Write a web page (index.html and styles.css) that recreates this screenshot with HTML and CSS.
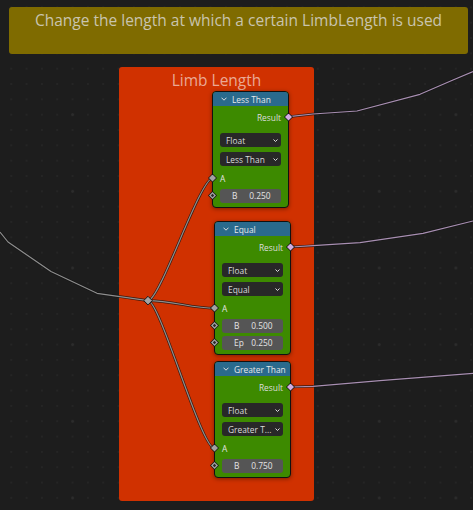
FILE: index.html
```html
<!DOCTYPE html>
<html>
<head>
<meta charset="utf-8">
<link rel="stylesheet" href="styles.css">
</head>
<body>
<div class="canvas">
  <div class="frame frame-note">Change the length at which a certain LimbLength is used</div>
  <div class="frame frame-limb"><span class="frame-label">Limb Length</span></div>

  <svg class="wires" width="473" height="510" viewBox="0 0 473 510">
    <g class="wire-grey">
      <polyline class="edge" points="0,232 8,242 51,271.5 97,293.3 148,300.6"/>
      <polyline class="core" points="0,232 8,242 51,271.5 97,293.3 148,300.6"/>
      <path class="edge" d="M148,300.6 C160,300.6 200,178 213,178"/>
      <path class="core" d="M148,300.6 C160,300.6 200,178 213,178"/>
      <path class="edge" d="M148,300.6 C172,300.6 192,308.3 215,308.3"/>
      <path class="core" d="M148,300.6 C172,300.6 192,308.3 215,308.3"/>
      <path class="edge" d="M148,300.6 C160,300.6 201,448.3 214.5,448.3"/>
      <path class="core" d="M148,300.6 C160,300.6 201,448.3 214.5,448.3"/>
    </g>
    <g class="wire-lilac">
      <polyline class="edge" points="289,116.7 313,114 357,111 420,94.3 453,80 473,71.5"/>
      <polyline class="core" points="289,116.7 313,114 357,111 420,94.3 453,80 473,71.5"/>
      <polyline class="edge" points="291,247 313,245.7 360,242.7 423,233.3 473,221"/>
      <polyline class="core" points="291,247 313,245.7 360,242.7 423,233.3 473,221"/>
      <polyline class="edge" points="290.5,387 313,386.3 380,380.7 473,373.3"/>
      <polyline class="core" points="290.5,387 313,386.3 380,380.7 473,373.3"/>
    </g>
    <polygon class="reroute" points="148,296.3 152.3,300.6 148,304.9 143.7,300.6"/>
  </svg>

  <div class="node node-less">
    <div class="node-header">
      <svg class="collapse" width="6" height="4" viewBox="0 0 6 4"><path d="M0.5 0.7 L3 3.2 L5.5 0.7"/></svg>
      <span>Less Than</span>
    </div>
    <div class="node-body">
      <div class="row out"><span>Result</span><i class="socket lilac"></i></div>
      <div class="select first"><span>Float</span><svg class="caret" width="5" height="3" viewBox="0 0 5 3"><path d="M0.5 0.5 L2.5 2.5 L4.5 0.5"/></svg></div>
      <div class="select"><span>Less Than</span><svg class="caret" width="5" height="3" viewBox="0 0 5 3"><path d="M0.5 0.5 L2.5 2.5 L4.5 0.5"/></svg></div>
      <div class="row in"><i class="socket grey"></i><span>A</span></div>
      <div class="field"><i class="socket hollow"></i><span>B</span><span>0.250</span></div>
    </div>
  </div>

  <div class="node node-equal">
    <div class="node-header">
      <svg class="collapse" width="6" height="4" viewBox="0 0 6 4"><path d="M0.5 0.7 L3 3.2 L5.5 0.7"/></svg>
      <span>Equal</span>
    </div>
    <div class="node-body">
      <div class="row out"><span>Result</span><i class="socket lilac"></i></div>
      <div class="select first"><span>Float</span><svg class="caret" width="5" height="3" viewBox="0 0 5 3"><path d="M0.5 0.5 L2.5 2.5 L4.5 0.5"/></svg></div>
      <div class="select"><span>Equal</span><svg class="caret" width="5" height="3" viewBox="0 0 5 3"><path d="M0.5 0.5 L2.5 2.5 L4.5 0.5"/></svg></div>
      <div class="row in"><i class="socket grey"></i><span>A</span></div>
      <div class="field"><i class="socket hollow"></i><span>B</span><span>0.500</span></div>
      <div class="field next"><i class="socket hollow"></i><span>Ep</span><span>0.250</span></div>
    </div>
  </div>

  <div class="node node-greater">
    <div class="node-header">
      <svg class="collapse" width="6" height="4" viewBox="0 0 6 4"><path d="M0.5 0.7 L3 3.2 L5.5 0.7"/></svg>
      <span>Greater Than</span>
    </div>
    <div class="node-body">
      <div class="row out"><span>Result</span><i class="socket lilac"></i></div>
      <div class="select first"><span>Float</span><svg class="caret" width="5" height="3" viewBox="0 0 5 3"><path d="M0.5 0.5 L2.5 2.5 L4.5 0.5"/></svg></div>
      <div class="select"><span>Greater T...</span><svg class="caret" width="5" height="3" viewBox="0 0 5 3"><path d="M0.5 0.5 L2.5 2.5 L4.5 0.5"/></svg></div>
      <div class="row in"><i class="socket grey"></i><span>A</span></div>
      <div class="field"><i class="socket hollow"></i><span>B</span><span>0.750</span></div>
    </div>
  </div>
</div>
</body>
</html>
```

FILE: styles.css
```css
html, body {
  margin: 0;
  padding: 0;
  background: #1d1d1d;
}

.canvas {
  position: relative;
  width: 473px;
  height: 510px;
  overflow: hidden;
  background-color: #1d1d1d;
  background-image:
    radial-gradient(circle, #2c2c2c 1.1px, transparent 1.6px),
    radial-gradient(circle, #252525 0.9px, transparent 1.4px);
  background-size: 76.667px 76.667px, 15.333px 15.333px;
  background-position: 34.3px -0.3px, 3.6px -0.3px;
  font-family: "Open Sans", "DejaVu Sans", sans-serif;
}

/* frames */
.frame {
  position: absolute;
  box-sizing: border-box;
  border-radius: 3px;
  text-align: center;
  font-size: 15.5px;
  line-height: 16px;
  padding-top: 5.4px;
}

.frame-note {
  left: 9px;
  top: 7px;
  width: 459px;
  height: 47px;
  background: #7f6b00;
  color: #c9c4ae;
}

.frame-limb {
  left: 119px;
  top: 67px;
  width: 195px;
  height: 434px;
  background: #d03100;
  color: #eaa995;
}

/* wires */
.wires {
  position: absolute;
  left: 0;
  top: 0;
  pointer-events: none;
}

.wires .edge {
  fill: none;
  stroke: #141414;
  stroke-width: 2.6;
  stroke-linejoin: round;
  opacity: 0.8;
}

.wires .core {
  fill: none;
  stroke-width: 1.2;
  stroke-linejoin: round;
}

.wire-grey .core { stroke: #8e8e8e; }
.wire-lilac .core { stroke: #a88fb2; }

.reroute {
  fill: #a3a3a3;
  stroke: #151515;
  stroke-width: 1;
}

/* nodes */
.node {
  position: absolute;
  width: 77px;
  box-sizing: border-box;
  border: 1px solid #111;
  border-radius: 4px;
  background: #3d8a00;
  box-shadow: 0 1px 4px rgba(0, 0, 0, 0.4);
  display: flex;
  flex-direction: column;
  font-size: 8.4px;
  color: #e2e2e2;
}

.node-less { left: 212px; top: 91px; }
.node-equal { left: 214px; top: 221px; }
.node-greater { left: 214px; top: 361px; }

.node-header {
  height: 14px;
  display: flex;
  align-items: center;
  gap: 5px;
  padding-left: 8px;
  background: #2a6a8d;
  border-radius: 3px 3px 0 0;
  color: #e8e8e8;
  white-space: nowrap;
}

.collapse path,
.caret path {
  fill: none;
  stroke: #dedede;
  stroke-width: 1;
}

.collapse { flex: none; }

.node-body {
  display: flex;
  flex-direction: column;
  padding: 5px 7px 4.5px 7px;
}

.row {
  position: relative;
  height: 12px;
  display: flex;
  align-items: center;
}

.row.out { justify-content: flex-end; color: #dcdcdc; }
.row.in { margin-top: 6px; }

.select {
  height: 14px;
  margin-top: 5px;
  display: flex;
  align-items: center;
  justify-content: space-between;
  padding: 0 3.5px 0 6px;
  box-sizing: border-box;
  background: #282828;
  border-radius: 3px;
  color: #dadada;
  white-space: nowrap;
}

.select.first { margin-top: 10px; }

.field {
  position: relative;
  height: 14px;
  margin-top: 4.5px;
  display: flex;
  align-items: center;
  justify-content: space-between;
  padding: 0 10.5px 0 12px;
  box-sizing: border-box;
  background: #555;
  border-radius: 3px;
  color: #e4e4e4;
}

.field.next { margin-top: 3px; }

/* sockets */
.socket {
  position: absolute;
  top: 50%;
  width: 9px;
  height: 9px;
  margin-top: -4.5px;
  background: #161616;
  clip-path: polygon(50% 0, 100% 50%, 50% 100%, 0 50%);
}

.socket::before,
.socket::after {
  content: "";
  position: absolute;
  clip-path: polygon(50% 0, 100% 50%, 50% 100%, 0 50%);
}

.socket::before { inset: 1px; }

.row.out .socket { right: -12px; }
.row.in .socket,
.field .socket { left: -12px; }

.socket.lilac::before { background: #d4ade2; }
.socket.grey::before { background: #a3a3a3; }
.socket.hollow::before { background: #a3a3a3; }
.socket.hollow::after { inset: 2.8px; background: #2a2a2a; }
```
